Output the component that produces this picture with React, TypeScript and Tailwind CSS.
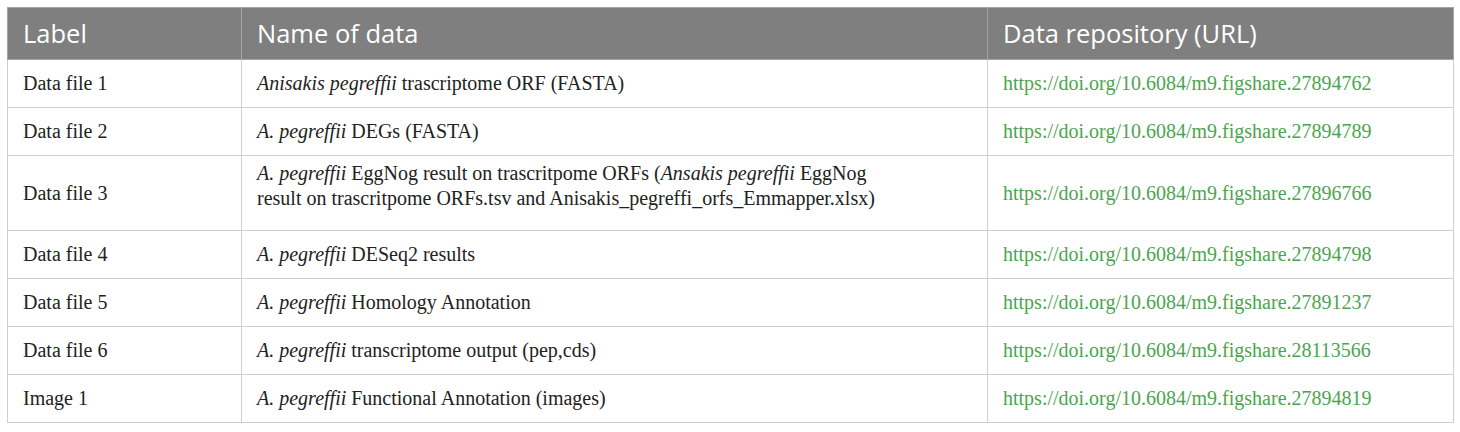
import React from "react"

interface DataRow {
    label: string
    name: React.ReactNode
    url: string
    tall?: boolean
}

const Sp = ({ children }: { children: React.ReactNode }) => <i>{children}</i>

const rows: DataRow[] = [
    {
        label: "Data file 1",
        name: <><Sp>Anisakis pegreffii</Sp> trascriptome ORF (FASTA)</>,
        url: "https://doi.org/10.6084/m9.figshare.27894762",
    },
    {
        label: "Data file 2",
        name: <><Sp>A. pegreffii</Sp> DEGs (FASTA)</>,
        url: "https://doi.org/10.6084/m9.figshare.27894789",
    },
    {
        label: "Data file 3",
        name: (
            <>
                <Sp>A. pegreffii</Sp> EggNog result on trascritpome ORFs (<Sp>Ansakis pegreffii</Sp> EggNog
                <br />
                result on trascritpome ORFs.tsv and Anisakis_pegreffi_orfs_Emmapper.xlsx)
            </>
        ),
        url: "https://doi.org/10.6084/m9.figshare.27896766",
        tall: true,
    },
    {
        label: "Data file 4",
        name: <><Sp>A. pegreffii</Sp> DESeq2 results</>,
        url: "https://doi.org/10.6084/m9.figshare.27894798",
    },
    {
        label: "Data file 5",
        name: <><Sp>A. pegreffii</Sp> Homology Annotation</>,
        url: "https://doi.org/10.6084/m9.figshare.27891237",
    },
    {
        label: "Data file 6",
        name: <><Sp>A. pegreffii</Sp> transcriptome output (pep,cds)</>,
        url: "https://doi.org/10.6084/m9.figshare.28113566",
    },
    {
        label: "Image 1",
        name: <><Sp>A. pegreffii</Sp> Functional Annotation (images)</>,
        url: "https://doi.org/10.6084/m9.figshare.27894819",
    },
]

export default function App() {
    return (
        <div className="bg-white w-[1460px] h-[432px] pt-[7px] pl-[7px]">
            <table className="w-[1446px] border-collapse border border-[#cacaca] table-fixed">
                <colgroup>
                    <col className="w-[234px]" />
                    <col className="w-[746px]" />
                    <col className="w-[466px]" />
                </colgroup>
                <thead>
                    <tr className="h-[52px] bg-[#7e7f7e] text-white text-[25.5px] font-['Open_Sans',sans-serif]">
                        <th className="text-left font-normal px-[15px] border border-[#a3a4a3]">Label</th>
                        <th className="text-left font-normal px-[15px] border border-[#a3a4a3]">Name of data</th>
                        <th className="text-left font-normal px-[15px] border border-[#a3a4a3]">Data repository (URL)</th>
                    </tr>
                </thead>
                <tbody className="font-['Liberation_Serif',serif] text-[20px] leading-[25px] text-[#222]">
                    {rows.map((row) => (
                        <tr key={row.label} className={row.tall ? "h-[75px]" : "h-[48px]"}>
                            <td className="px-[15px] border border-[#cfcfcf]">{row.label}</td>
                            <td className={"px-[15px] border border-[#cfcfcf] " + (row.tall ? "align-top pt-[5px]" : "")}>
                                {row.name}
                            </td>
                            <td className="px-[15px] border border-[#cfcfcf] text-[#4ba54f]">{row.url}</td>
                        </tr>
                    ))}
                </tbody>
            </table>
        </div>
    )
}
